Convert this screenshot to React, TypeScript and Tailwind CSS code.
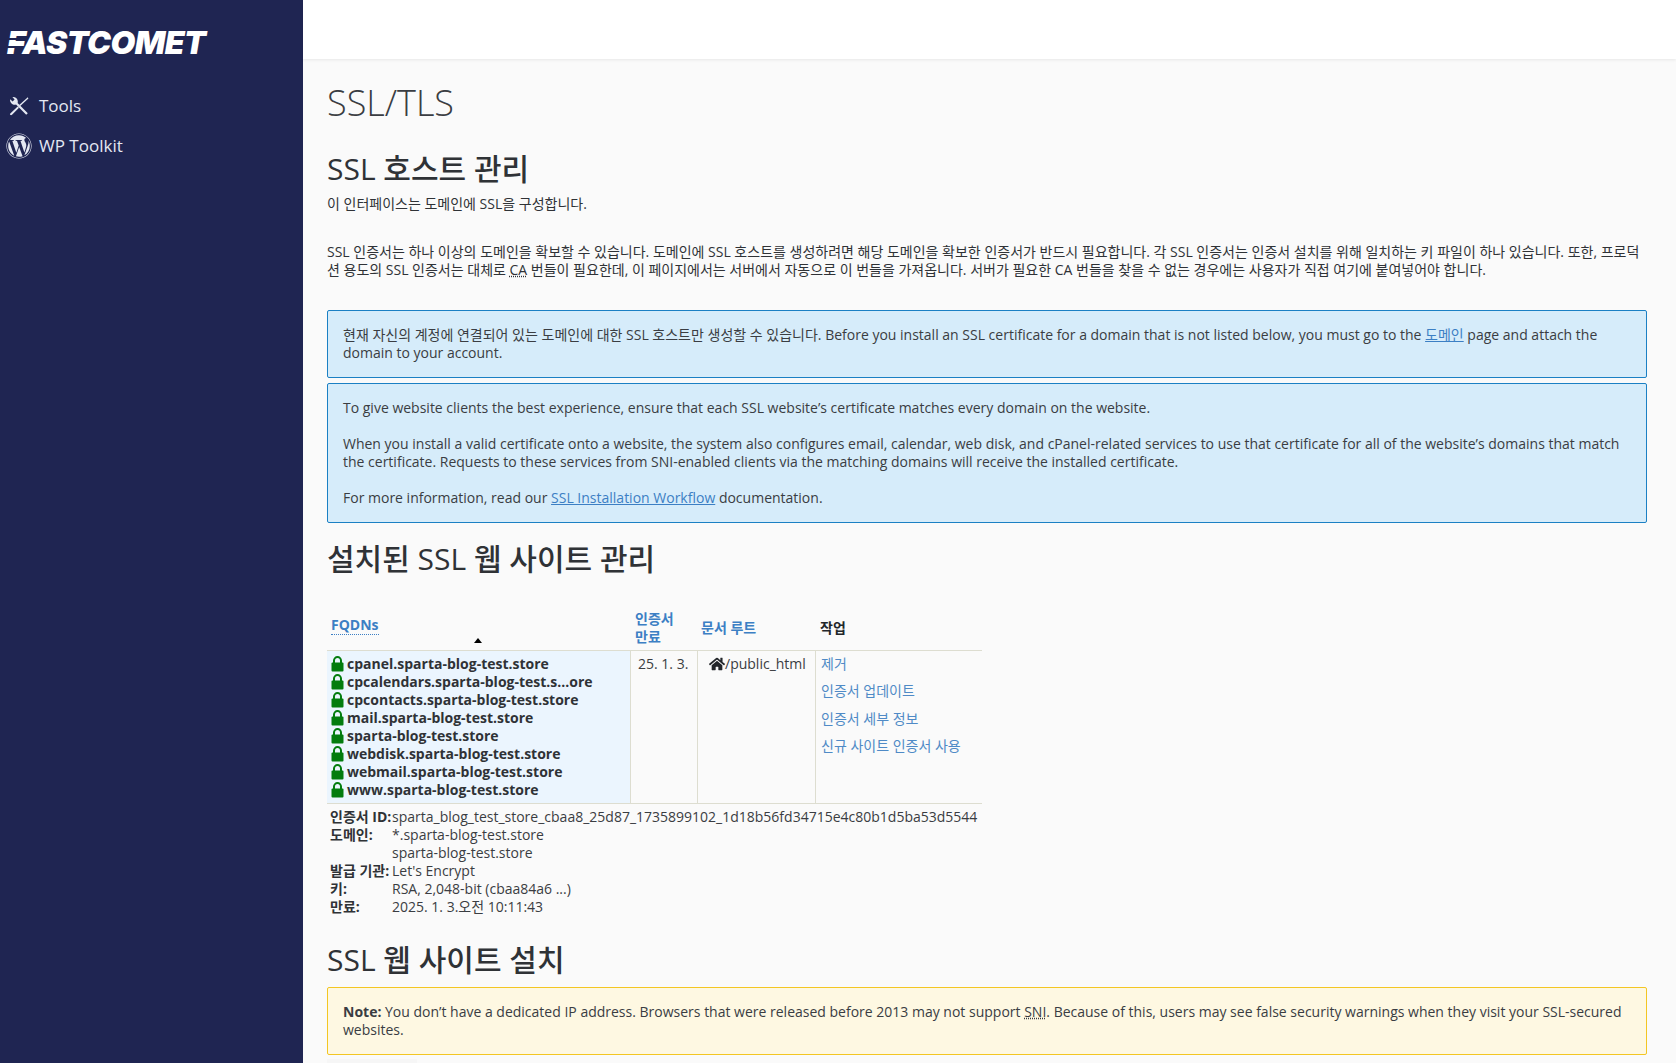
import React from 'react';
import { FaWordpress, FaHome } from 'react-icons/fa';

const fqdns = [
    'cpanel.sparta-blog-test.store',
    'cpcalendars.sparta-blog-test.s...ore',
    'cpcontacts.sparta-blog-test.store',
    'mail.sparta-blog-test.store',
    'sparta-blog-test.store',
    'webdisk.sparta-blog-test.store',
    'webmail.sparta-blog-test.store',
    'www.sparta-blog-test.store',
];

const actions = ['제거', '인증서 업데이트', '인증서 세부 정보', '신규 사이트 인증서 사용'];

const details = [
    { label: '인증서 ID:', value: ['sparta_blog_test_store_cbaa8_25d87_1735899102_1d18b56fd34715e4c80b1d5ba53d5544'] },
    { label: '도메인:', value: ['*.sparta-blog-test.store', 'sparta-blog-test.store'] },
    { label: '발급 기관:', value: ["Let's Encrypt"] },
    { label: '키:', value: ['RSA, 2,048-bit (cbaa84a6 ...)'] },
    { label: '만료:', value: ['2025. 1. 3.오전 10:11:43'] },
];

const LockIcon = () => (
    <svg width="13" height="16" viewBox="0 0 13 16" className="mr-[3px] shrink-0" fill="none">
        <path d="M3 7V4.6a3.5 3.5 0 0 1 7 0V7" stroke="#037c0e" strokeWidth="2" />
        <rect x="0.5" y="6.5" width="12" height="9" rx="1" fill="#037c0e" />
    </svg>
);

const Sidebar = () => (
    <aside className="w-[303px] shrink-0 bg-[#1f2552] text-[#e4e8f2]">
        <div className="relative h-[59px] pl-[7px] pt-[24px]">
            <div className="font-['Inter',sans-serif] text-[32px] leading-[38px] font-black italic tracking-[-0.6px] text-white">
                FASTCOMET
            </div>
            {/* slits in the logo F */}
            <span className="absolute left-[6px] top-[38px] h-[2px] w-[14px] bg-[#1f2552]"></span>
            <span className="absolute left-[6px] top-[46px] h-[2px] w-[12px] bg-[#1f2552]"></span>
        </div>
        <nav className="mt-[32px] flex flex-col gap-[10px] text-[17px] leading-[30px]">
            <div className="flex items-center pl-[9px]">
                <svg width="20" height="20" viewBox="0 0 20 20" fill="#e4e8f2">
                    <path d="M1.2 3.2 3.6 5.4 5.6 3.4 3.4 1.1A4.6 4.6 0 0 1 8.6 7L18.8 17.2 17.2 18.8 7 8.6A4.6 4.6 0 0 1 1.2 3.2Z" />
                    <path d="M18.8 1.2 19.4 2.4 11.2 10 10.2 9Z" />
                    <path d="M8.6 10.4 10 11.8 3 18.8Q2 19.6 1.2 18.8T1.6 17.2Z" />
                </svg>
                <span className="ml-[10px] font-['Open_Sans',sans-serif]">Tools</span>
            </div>
            <div className="flex items-center pl-[6px]">
                <FaWordpress className="h-[26px] w-[26px] text-[#e4e8f2]" />
                <span className="ml-[7px] font-['Open_Sans',sans-serif]">WP Toolkit</span>
            </div>
        </nav>
    </aside>
);

const Alert = ({ tone, children }: { tone: 'info' | 'warn'; children: React.ReactNode }) => (
    <div className={`rounded-[2px] border px-[15px] py-[15px] ${tone === 'info' ? 'border-[#1b80c4] bg-[#d6ecfa]' : 'border-[#f3c623] bg-[#fef8e2]'}`}>
        {children}
    </div>
);

const InstalledTable = () => (
    <div className="w-[655px]">
        <div className="flex h-[50px] border-b border-[#ddddd0] font-bold text-[#3c7fc4]">
            <div className="relative w-[303px] pl-[4px] pt-[15px]">
                <span className="border-b border-dotted border-[#3c7fc4] leading-[16px]">FQDNs</span>
                <span className="absolute left-[147px] top-[37px] h-0 w-0 border-x-[4px] border-b-[5px] border-x-transparent border-b-black"></span>
            </div>
            <div className="w-[67px] pl-[5px] pt-[9px] leading-[18px]">인증서<br />만료</div>
            <div className="w-[118px] pl-[4px] pt-[18px] leading-[18px]">문서 루트</div>
            <div className="w-[167px] pl-[5px] pt-[18px] leading-[18px] text-[#23262a]">작업</div>
        </div>
        <div className="flex h-[153px] border-b border-[#ddddd0]">
            <div className="w-[303px] bg-[#ebf5fe] py-[4px] pl-[4px] font-bold leading-[18px] text-[#2f3236]">
                {fqdns.map(name => (
                    <div key={name} className="flex items-center">
                        <LockIcon />
                        <span>{name}</span>
                    </div>
                ))}
            </div>
            <div className="w-[67px] border-l border-[#ddddd0] pl-[7px] pt-[4px] leading-[18px]">25. 1. 3.</div>
            <div className="flex w-[118px] items-start border-l border-[#ddddd0] pl-[11px] pt-[4px] leading-[18px]">
                <FaHome className="mt-[1px] h-[16px] w-[16px] text-[#23262a]" />
                <span>/public_html</span>
            </div>
            <div className="flex w-[167px] flex-col gap-[9.3px] border-l border-[#ddddd0] pl-[5px] pt-[4px] leading-[18px] text-[#4f8ac6]">
                {actions.map(a => <span key={a}>{a}</span>)}
            </div>
        </div>
        <div className="pl-[3px] pt-[4px] leading-[18px]">
            {details.map(row => (
                <div key={row.label} className="flex">
                    <div className="w-[62px] shrink-0 font-bold whitespace-nowrap text-[#2f3236]">{row.label}</div>
                    <div className="whitespace-nowrap">
                        {row.value.map(v => <div key={v}>{v}</div>)}
                    </div>
                </div>
            ))}
        </div>
    </div>
);

export default function App() {
    return (
        <div className="flex h-[1063px] w-[1676px] overflow-hidden bg-[#fafafa] font-['Open_Sans','Noto_Sans_CJK_KR',sans-serif] text-[14px] leading-[18px] text-[#3a3d42]">
            <Sidebar />
            <main className="min-w-0 flex-1">
                <div className="h-[59px] bg-white shadow-[0_1px_3px_rgba(0,0,0,0.08)]"></div>
                <div className="pl-[24px] pr-[29px]">
                    <h1 className="mt-[19px] text-[36px] leading-[50px] font-light text-[#3a3d42]">SSL/TLS</h1>
                    <h2 className="mt-[20px] text-[30px] leading-[42px] font-medium text-[#2f3236]">SSL 호스트 관리</h2>
                    <p className="mt-[5px] text-[#2f3236]">이 인터페이스는 도메인에 SSL을 구성합니다.</p>
                    <p className="mt-[30px] text-[#2f3236]">
                        SSL 인증서는 하나 이상의 도메인을 확보할 수 있습니다. 도메인에 SSL 호스트를 생성하려면 해당 도메인을 확보한 인증서가 반드시 필요합니다. 각 SSL 인증서는 인증서 설치를 위해 일치하는 키 파일이 하나 있습니다. 또한, 프로덕션 용도의 SSL 인증서는 대체로{' '}
                        <span className="underline decoration-dotted">CA</span> 번들이 필요한데, 이 페이지에서는 서버에서 자동으로 이 번들을 가져옵니다. 서버가 필요한 CA 번들을 찾을 수 없는 경우에는 사용자가 직접 여기에 붙여넣어야 합니다.
                    </p>
                    <div className="mt-[31px]">
                        <Alert tone="info">
                            현재 자신의 계정에 연결되어 있는 도메인에 대한 SSL 호스트만 생성할 수 있습니다. Before you install an SSL certificate for a domain that is not listed below, you must go to the{' '}
                            <span className="text-[#3c7fc4] underline">도메인</span> page and attach the domain to your account.
                        </Alert>
                    </div>
                    <div className="mt-[5px]">
                        <Alert tone="info">
                            <p>To give website clients the best experience, ensure that each SSL website’s certificate matches every domain on the website.</p>
                            <p className="mt-[18px]">When you install a valid certificate onto a website, the system also configures email, calendar, web disk, and cPanel-related services to use that certificate for all of the website’s domains that match the certificate. Requests to these services from SNI-enabled clients via the matching domains will receive the installed certificate.</p>
                            <p className="mt-[18px]">For more information, read our <span className="text-[#3c7fc4] underline">SSL Installation Workflow</span> documentation.</p>
                        </Alert>
                    </div>
                    <h2 className="mt-[15px] text-[30px] leading-[42px] font-medium text-[#2f3236]">설치된 SSL 웹 사이트 관리</h2>
                    <div className="mt-[21px]">
                        <InstalledTable />
                    </div>
                    <h2 className="mt-[23px] text-[30px] leading-[42px] font-medium text-[#2f3236]">SSL 웹 사이트 설치</h2>
                    <div className="mt-[6px]">
                        <Alert tone="warn">
                            <strong>Note:</strong> You don’t have a dedicated IP address. Browsers that were released before 2013 may not support{' '}
                            <span className="underline decoration-dotted">SNI</span>. Because of this, users may see false security warnings when they visit your SSL-secured websites.
                        </Alert>
                    </div>
                    {/* top edge of what continues below the fold */}
                    <div className="mt-[4px] h-[8px] w-[90px] bg-[#f6f6f6]"></div>
                </div>
            </main>
        </div>
    );
}
